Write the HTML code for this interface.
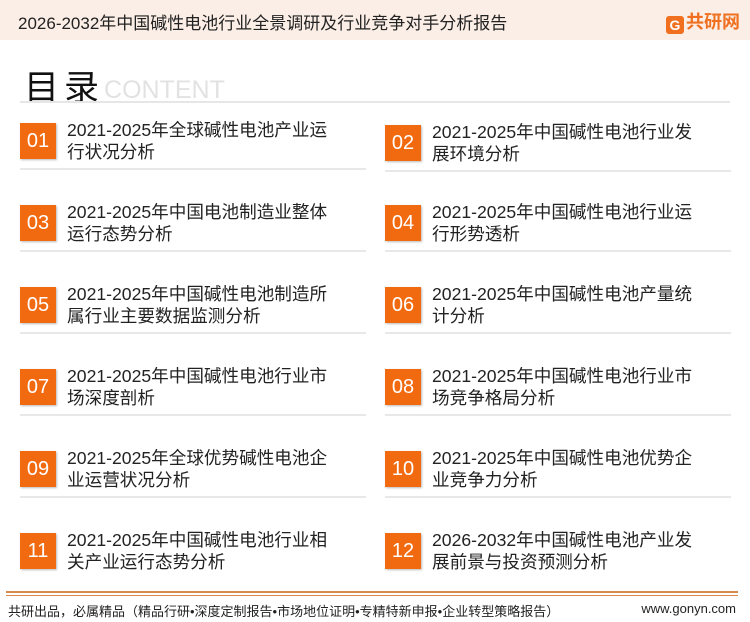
<!DOCTYPE html>
<html><head><meta charset="utf-8"><style>
*{margin:0;padding:0;box-sizing:border-box}
body{width:750px;height:622px;background:#fff;position:relative;overflow:hidden;font-family:"Liberation Sans","Noto Sans CJK SC",sans-serif;color:#222}
.hdr{position:absolute;left:0;top:0;width:750px;height:40px;background:#fbeee6}
.hdr .t{position:absolute;left:18px;top:9px;font-size:17px;color:#222}
.logo{position:absolute;left:666px;top:8px;font-size:18px;font-weight:bold;color:#f07020}
.logo b{display:inline-block;width:18px;height:18px;background:#f07020;color:#fff;font-size:14px;text-align:center;line-height:18px;border-radius:3px;margin-right:2px;vertical-align:-2px}
.ttl{position:absolute;left:24px;top:60px;font-size:35px;color:#111;letter-spacing:5px}
.ttl span{font-size:25px;color:#e2e2e2;letter-spacing:0;margin-left:0;vertical-align:2px}
.hl{position:absolute;left:20px;top:101px;width:710px;height:2px;background:#e6e6e6}
.it{position:absolute;width:346px;height:50px}
.it .n{position:absolute;left:0;top:0;width:36px;height:36px;background:#f26a10;color:#fff;font-size:20px;text-align:center;line-height:36px;box-shadow:1px 1px 2px #bbb}
.it .x{position:absolute;left:47px;top:-4px;font-size:17.6px;line-height:22px;width:276px;color:#222}
.it .l{position:absolute;left:0;top:45px;width:346px;height:2px;background:#e8e8e8}
.f1{position:absolute;left:6px;top:591px;width:732px;height:2px;background:#d98a4e}
.f2{position:absolute;left:6px;top:595px;width:732px;height:1px;background:#d98a4e}
.ft{position:absolute;left:8px;top:601px;font-size:13px;color:#222}
.fr{position:absolute;right:14px;top:601px;font-size:13px;color:#222}
</style></head><body>
<div class="hdr"><div class="t">2026-2032年中国碱性电池行业全景调研及行业竞争对手分析报告</div><div class="logo"><b>G</b>共研网</div></div>
<div class="ttl">目录<span>CONTENT</span></div>
<div class="hl"></div>

<div class="it" style="left:20px;top:123px"><div class="n">01</div><div class="x">2021-2025年全球碱性电池产业运行状况分析</div><div class="l"></div></div>
<div class="it" style="left:385px;top:125px"><div class="n">02</div><div class="x">2021-2025年中国碱性电池行业发展环境分析</div><div class="l"></div></div>
<div class="it" style="left:20px;top:205px"><div class="n">03</div><div class="x">2021-2025年中国电池制造业整体运行态势分析</div><div class="l"></div></div>
<div class="it" style="left:385px;top:205px"><div class="n">04</div><div class="x">2021-2025年中国碱性电池行业运行形势透析</div><div class="l"></div></div>
<div class="it" style="left:20px;top:287px"><div class="n">05</div><div class="x">2021-2025年中国碱性电池制造所属行业主要数据监测分析</div><div class="l"></div></div>
<div class="it" style="left:385px;top:287px"><div class="n">06</div><div class="x">2021-2025年中国碱性电池产量统计分析</div><div class="l"></div></div>
<div class="it" style="left:20px;top:369px"><div class="n">07</div><div class="x">2021-2025年中国碱性电池行业市场深度剖析</div><div class="l"></div></div>
<div class="it" style="left:385px;top:369px"><div class="n">08</div><div class="x">2021-2025年中国碱性电池行业市场竞争格局分析</div><div class="l"></div></div>
<div class="it" style="left:20px;top:451px"><div class="n">09</div><div class="x">2021-2025年全球优势碱性电池企业运营状况分析</div><div class="l"></div></div>
<div class="it" style="left:385px;top:451px"><div class="n">10</div><div class="x">2021-2025年中国碱性电池优势企业竞争力分析</div><div class="l"></div></div>
<div class="it" style="left:20px;top:533px"><div class="n">11</div><div class="x">2021-2025年中国碱性电池行业相关产业运行态势分析</div></div>
<div class="it" style="left:385px;top:533px"><div class="n">12</div><div class="x">2026-2032年中国碱性电池产业发展前景与投资预测分析</div></div>

<div class="f1"></div><div class="f2"></div>
<div class="ft">共研出品，必属精品（精品行研•深度定制报告•市场地位证明•专精特新申报•企业转型策略报告）</div>
<div class="fr">www.gonyn.com</div>
</body></html>
